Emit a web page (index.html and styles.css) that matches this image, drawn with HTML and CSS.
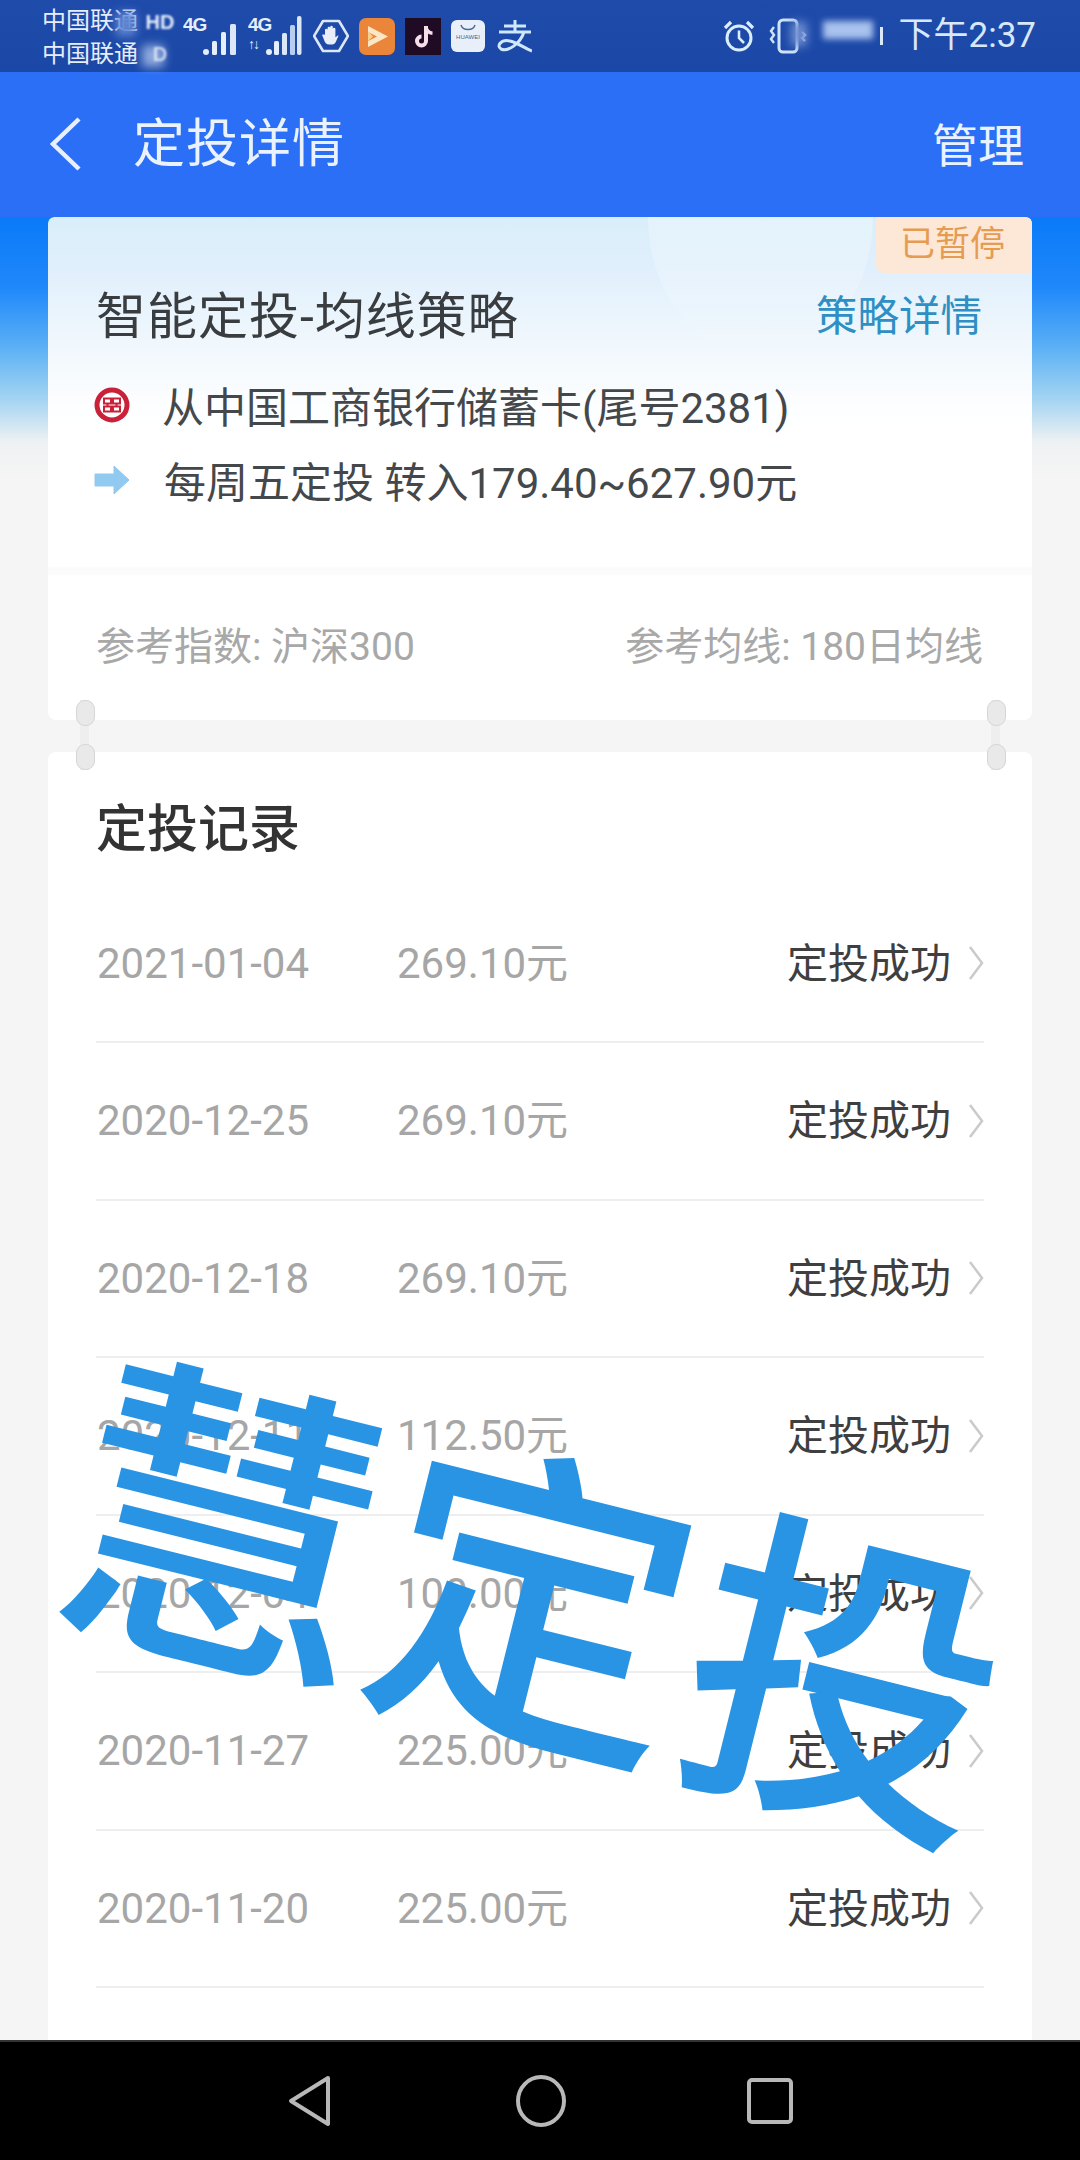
FILE: index.html
```html
<!DOCTYPE html>
<html lang="zh-CN">
<head>
<meta charset="utf-8">
<title>定投详情</title>
<link rel="stylesheet" href="styles.css">
</head>
<body>
<div class="phone">
  <header class="status">
    <div class="carriers">
      <div class="carrier">中国联通<i class="smudge s1"></i></div>
      <div class="carrier">中国联通<i class="smudge s2"></i></div>
    </div>
    <div class="hd"><span class="hd-top">HD</span><span class="hd-bot">D</span></div>
    <div class="sig">
      <span class="g4">4G</span>
      <svg width="36" height="42" viewBox="0 0 36 42"><circle cx="3" cy="35" r="3" fill="#e6eefb"/><rect x="9" y="24" width="5" height="14" rx="1.5" fill="#e6eefb"/><rect x="18" y="15" width="5" height="23" rx="1.5" fill="#e6eefb"/><rect x="27" y="7" width="6" height="31" rx="1.5" fill="#dbe6f8"/></svg>
    </div>
    <div class="sig sig2">
      <span class="g4">4G<small>↑↓</small></span>
      <svg width="36" height="46" viewBox="0 0 36 46"><circle cx="3" cy="39" r="3" fill="#e6eefb"/><rect x="8" y="28" width="5" height="14" rx="1.5" fill="#e6eefb"/><rect x="16" y="20" width="5" height="22" rx="1.5" fill="#dbe6f8"/><rect x="24" y="12" width="5" height="30" rx="1.5" fill="#b9cdef"/><rect x="31" y="3" width="4.500" height="39" rx="2" fill="#dbe6f8"/></svg>
    </div>
    <svg class="ic-hand" width="36" height="36" viewBox="0 0 36 36"><path d="M10 3h16l9 15-9 15H10L1 18z" fill="none" stroke="#dce8f8" stroke-width="2.600" stroke-linejoin="round"/><path d="M12 18v-6a1.300 1.300 0 0 1 2.600 0v-2a1.300 1.300 0 0 1 2.600 0v-1a1.300 1.300 0 0 1 2.600 0v2a1.300 1.300 0 0 1 2.600 0v8c0 1 1.500-2 3.200-1.500l-2.800 6.500c-1 2-2.500 2.500-4.500 2.500h-2c-3 0-4.500-2-5.200-4.500l-2-5c1.500-1 3.500 0 3.900 1z" fill="#e8eefa"/></svg>
    <svg class="ic-app" width="36" height="37" viewBox="0 0 36 37"><rect width="36" height="37" rx="7" fill="#ea8539"/><path d="M9 8l20 10.500L9 29v-6l9-4.500-9-4.500z" fill="#fbe7c6"/><path d="M9 13v10l5-4.500z" fill="#f9cf8f"/></svg>
    <svg class="ic-app" width="36" height="37" viewBox="0 0 36 37"><rect width="36" height="37" fill="#1f0b24"/><path d="M21 8v15a4.500 4.500 0 1 1-4.500-4.500" fill="none" stroke="#f6dfe8" stroke-width="4"/><path d="M21 9c.5 3.500 3 6 6.500 6.200" fill="none" stroke="#f6dfe8" stroke-width="3.600"/></svg>
    <div class="huawei"><svg width="16" height="8" viewBox="0 0 16 8"><path d="M1 1c1.500 6 12.500 6 14 0" fill="none" stroke="#4d6a94" stroke-width="1.400"/></svg><span>HUAWEI</span></div>
    <svg class="zhi" width="36" height="34" viewBox="0 0 36 34"><path d="M8 7H30M19 1V13M3 13H35M28 13C24 25 12 33 5 30C0 27 5 20 14 22C22 24 30 30 36 32" fill="none" stroke="#cfe8fb" stroke-width="3"/></svg>
    <div class="status-right">
      <svg width="34" height="34" viewBox="0 0 34 34"><circle cx="17" cy="19" r="12" fill="none" stroke="#d9edfb" stroke-width="3"/><path d="M17 11.500V19l5 5" fill="none" stroke="#d9edfb" stroke-width="2.600"/><path d="M3 9l6-6M31 9l-6-6" stroke="#d9edfb" stroke-width="3.200"/></svg>
      <div class="vib">
        <svg width="42" height="36" viewBox="0 0 42 36"><rect x="12" y="2" width="18" height="32" rx="4" fill="none" stroke="#cfe3fa" stroke-width="3"/><path d="M7 9l-3 4 3 4-3 4 3 4" fill="none" stroke="#cfe3fa" stroke-width="2.400"/><path d="M35 14l3 3-3 3 3 3" fill="none" stroke="#cfe3fa" stroke-width="2.400"/></svg>
        <i class="smudge s3"></i>
      </div>
      <div class="batt"><i class="batt-fill"></i><i class="batt-cap"></i></div>
      <span class="time">下午2:37</span>
    </div>
  </header>

  <nav class="nav">
    <svg class="nav-back" width="36" height="56" viewBox="0 0 36 56"><path d="M31 3L5 28l26 25" fill="none" stroke="#e8f0fd" stroke-width="4.500"/></svg>
    <h1 class="nav-title">定投详情</h1>
    <span class="nav-action">管理</span>
  </nav>

  <main class="content">
    <section class="plan">
      <div class="plan-top">
        <i class="swoosh"></i>
        <span class="tag">已暂停</span>
        <div class="plan-head">
          <h2 class="plan-title">智能定投-均线策略</h2>
          <span class="plan-link">策略详情</span>
        </div>
        <div class="plan-line">
          <svg class="line-ic" width="36" height="36" viewBox="0 0 36 36"><circle cx="18" cy="18" r="15" fill="#fff" stroke="#c9213a" stroke-width="5"/><path d="M10 11.500h7v5h-7zM19 11.500h7v5h-7zM10 19.500h7v5h-7zM19 19.500h7v5h-7zM13.500 16.500v3M22.500 16.500v3" fill="none" stroke="#c9213a" stroke-width="2"/></svg>
          <span>从中国工商银行储蓄卡(尾号2381)</span>
        </div>
        <div class="plan-line">
          <svg class="line-ic" width="36" height="30" viewBox="0 0 36 30"><path d="M1 9h19V1l15 14-15 14v-8H1z" fill="#92c9f1" stroke="#92c9f1" stroke-linejoin="round"/></svg>
          <span class="indent">每周五定投 转入179.40~627.90元</span>
        </div>
      </div>
      <div class="plan-ref">
        <span>参考指数: 沪深300</span>
        <span>参考均线: 180日均线</span>
      </div>
    </section>

    <section class="records">
      <i class="ring ring-l"></i>
      <i class="ring ring-r"></i>
      <h2 class="records-title">定投记录</h2>
      <div class="row"><span class="date">2021-01-04</span><span class="amt">269.10元</span><span class="st">定投成功</span><svg class="chev" width="16" height="36" viewBox="0 0 16 36"><path d="M2 2l12 16L2 34" fill="none" stroke="#cacaca" stroke-width="2.500"/></svg></div>
      <div class="row"><span class="date">2020-12-25</span><span class="amt">269.10元</span><span class="st">定投成功</span><svg class="chev" width="16" height="36" viewBox="0 0 16 36"><path d="M2 2l12 16L2 34" fill="none" stroke="#cacaca" stroke-width="2.500"/></svg></div>
      <div class="row"><span class="date">2020-12-18</span><span class="amt">269.10元</span><span class="st">定投成功</span><svg class="chev" width="16" height="36" viewBox="0 0 16 36"><path d="M2 2l12 16L2 34" fill="none" stroke="#cacaca" stroke-width="2.500"/></svg></div>
      <div class="row"><span class="date">2020-12-11</span><span class="amt">112.50元</span><span class="st">定投成功</span><svg class="chev" width="16" height="36" viewBox="0 0 16 36"><path d="M2 2l12 16L2 34" fill="none" stroke="#cacaca" stroke-width="2.500"/></svg></div>
      <div class="row"><span class="date">2020-12-04</span><span class="amt">100.00元</span><span class="st">定投成功</span><svg class="chev" width="16" height="36" viewBox="0 0 16 36"><path d="M2 2l12 16L2 34" fill="none" stroke="#cacaca" stroke-width="2.500"/></svg></div>
      <div class="row"><span class="date">2020-11-27</span><span class="amt">225.00元</span><span class="st">定投成功</span><svg class="chev" width="16" height="36" viewBox="0 0 16 36"><path d="M2 2l12 16L2 34" fill="none" stroke="#cacaca" stroke-width="2.500"/></svg></div>
      <div class="row"><span class="date">2020-11-20</span><span class="amt">225.00元</span><span class="st">定投成功</span><svg class="chev" width="16" height="36" viewBox="0 0 16 36"><path d="M2 2l12 16L2 34" fill="none" stroke="#cacaca" stroke-width="2.500"/></svg></div>
    </section>
  </main>

  <footer class="softkeys">
    <svg class="key-back" width="44" height="52" viewBox="0 0 44 52"><path d="M40 3L3 26l37 23z" fill="none" stroke="#b8b8b8" stroke-width="4" stroke-linejoin="round"/></svg>
    <svg width="50" height="52" viewBox="0 0 50 52"><ellipse cx="25" cy="26" rx="23" ry="24" fill="none" stroke="#b8b8b8" stroke-width="4"/></svg>
    <svg width="46" height="46" viewBox="0 0 46 46"><rect x="2" y="2" width="42" height="42" rx="3" fill="none" stroke="#b8b8b8" stroke-width="4"/></svg>
  </footer>

  <div class="stamp"><span>慧</span><span>定</span><span>投</span></div>
</div>
</body>
</html>
```

FILE: styles.css
```css
* { box-sizing: border-box; }
html, body { margin: 0; padding: 0; }
body { font-family: Roboto, "Noto Sans CJK SC", sans-serif; background: #f5f5f5; }
h1, h2 { margin: 0; font-weight: 400; }
i { display: block; font-style: normal; }

.phone { position: relative; width: 1080px; height: 2160px; overflow: hidden; display: flex; flex-direction: column; }

/* status bar */
.status { height: 72px; flex: none; display: flex; align-items: center; padding-left: 42px; background: linear-gradient(#1f4bab, #1b48a6); color: #e6eefb; }
.carriers { width: 98px; display: flex; flex-direction: column; gap: 7px; font-size: 24px; line-height: 26px; margin-top: 2px; }
.carrier { position: relative; white-space: nowrap; }
.smudge { position: absolute; filter: blur(5px); }
.s1 { left: 74px; top: 4px; width: 20px; height: 24px; background: #5f86d2; }
.s2 { left: 100px; top: 4px; width: 22px; height: 22px; background: #8fa9dc; }
.hd { width: 40px; height: 60px; display: flex; flex-direction: column; justify-content: space-between; align-items: center; font: 700 20px/24px "Liberation Sans", sans-serif; filter: blur(1.200px); padding-top: 4px; }
.hd-bot { opacity: .8; }
.sig { width: 62px; height: 46px; position: relative; display: flex; align-items: flex-end; justify-content: flex-end; padding-right: 3px; }
.sig2 { width: 58px; margin-left: 3px; padding-right: 1px; }
.g4 { position: absolute; left: 3px; top: 2px; font: 700 19px/19px "Liberation Sans Narrow", "Liberation Sans", sans-serif; letter-spacing: -1px; color: #e6eefb; }
.g4 small { display: block; font-size: 14px; line-height: 14px; letter-spacing: -2px; margin-top: 3px; }
.ic-hand { margin-left: 10px; }
.ic-app { margin-left: 10px; }
.huawei { width: 34px; height: 32px; margin-left: 10px; border-radius: 6px; background: #e8eff9; display: flex; flex-direction: column; align-items: center; padding-top: 4px; overflow: hidden; }
.huawei span { font: 6px/8px "Liberation Sans", sans-serif; color: #48648f; margin-top: 1px; }
.zhi { margin-left: 11px; }
.status-right { margin-left: auto; padding-right: 44px; display: flex; align-items: center; height: 100%; }
.vib { position: relative; margin-left: 11px; width: 42px; height: 36px; }
.s3 { left: 24px; top: 4px; width: 16px; height: 24px; background: #6f8ed0; }
.batt { position: relative; width: 60px; height: 36px; margin-left: 14px; margin-right: 16px; }
.batt-fill { position: absolute; left: 0; top: 3px; width: 50px; height: 18px; background: #a9c2ee; filter: blur(3px); }
.batt-cap { position: absolute; right: 0; top: 9px; width: 3px; height: 18px; background: #dce8f8; }
.time { font-size: 35px; line-height: 40px; color: #d8e8fb; white-space: nowrap; }

/* nav bar */
.nav { height: 145px; flex: none; display: flex; align-items: center; padding: 0 56px 0 48px; background: #2a6ff5; color: #eaf2fe; }
.nav-back { margin-top: -2px; }
.nav-title { margin-left: 49px; font-size: 52px; letter-spacing: 1px; line-height: 60px; margin-top: 0; }
.nav-action { margin-left: auto; margin-top: 2px; font-size: 46px; line-height: 52px; }

/* content */
.content { flex: 1; min-height: 0; padding: 0 48px; overflow: hidden; background: linear-gradient(#0a7af8 0, #1f88fa 70px, #5bb0f5 130px, #a8d6f2 185px, #eef1f3 225px, #f5f5f5 260px); }
.plan { border-radius: 6px; overflow: hidden; }
.plan-top { position: relative; height: 350px; background: linear-gradient(#d9eefa 0, #e0effc 50px, #f1f8fd 130px, #fdfeff 190px, #fff 230px); padding: 0 48px; border-radius: 6px 6px 0 0; overflow: hidden; }
.swoosh { position: absolute; left: 600px; top: -140px; width: 225px; height: 280px; border-radius: 50%; background: linear-gradient(rgba(255,255,255,.5), rgba(255,255,255,.2) 70%, rgba(255,255,255,0)); }
.tag { position: absolute; right: 0; top: 0; width: 156px; height: 56px; padding-left: 24px; background: #fde8d8; border-radius: 0 0 0 8px; color: #e69c50; font-size: 35px; line-height: 56px; }
.plan-head { position: relative; display: flex; align-items: center; justify-content: space-between; padding-top: 70px; height: 130px; padding-right: 2px; margin-bottom: 20px; }
.plan-title { font-size: 50px; letter-spacing: 1px; line-height: 60px; color: #3a3d40; white-space: nowrap; }
.plan-link { font-size: 41.500px; line-height: 60px; color: #2d8fc4; }
.plan-line { position: relative; display: flex; align-items: center; height: 75px; font-size: 42px; color: #45484b; white-space: nowrap; }
.line-ic { flex: none; margin-right: 32px; margin-left: -2px; }
.indent { margin-left: 2px; }
.plan-ref { height: 153px; background: #fff; border-top: 8px solid #fbfbfb; display: flex; justify-content: space-between; align-items: center; padding: 0 49px 10px 48px; font-size: 39px; color: #a8a8a8; border-radius: 0 0 8px 8px; }

/* records */
.records { position: relative; margin-top: 32px; background: #fff; border-radius: 8px 8px 0 0; padding: 0 48px; height: 1300px; }
.ring { position: absolute; top: -52px; width: 9px; height: 70px; background: #eeeeee; }
.ring::before, .ring::after { content: ""; position: absolute; left: -4px; width: 17px; height: 24px; border-radius: 9px; background: #e9e9e9; border: 1px solid #d6d6d6; }
.ring::before { top: 0; }
.ring::after { bottom: 0; }
.ring-l { left: 32px; }
.ring-r { right: 32px; }
.records-title { height: 133.500px; padding-top: 50px; font-size: 51px; line-height: 56px; font-weight: 500; color: #333; }
.row { height: 157.500px; display: flex; align-items: baseline; line-height: 155px; border-bottom: 2px solid #eeeeee; font-size: 42px; }
.date { width: 300px; color: #a6a6a6; margin-left: 1px; }
.amt { color: #a6a6a6; }
.st { margin-left: auto; font-size: 41px; color: #3f3f3f; }
.chev { align-self: center; flex: none; margin-left: 17px; }

/* soft keys */
.softkeys { height: 120px; flex: none; background: #000; border-top: 2px solid #333; display: flex; align-items: center; justify-content: center; gap: 181px; }
.key-back { margin-right: 3px; }

/* overlay */
.stamp { position: absolute; left: 75px; top: 1309px; display: flex; gap: 4px; font-family: "Noto Sans CJK SC", sans-serif; font-size: 316px; line-height: 320px; font-weight: 500; color: #2a94e4; transform: rotate(14deg); transform-origin: 0 50%; white-space: nowrap; }
```
